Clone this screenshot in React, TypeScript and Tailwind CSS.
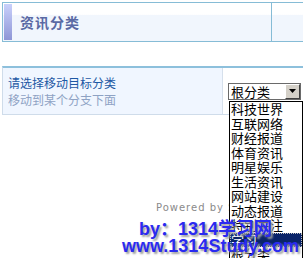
import React from "react";

const items = [
  "科技世界",
  "互联网络",
  "财经报道",
  "体育资讯",
  "明星娱乐",
  "生活资讯",
  "网站建设",
  "动态报道",
  "特别关注",
  "学习",
  "根分类",
];

export default function App() {
  const cjk = { fontFamily: '"Noto Sans CJK SC", "Noto Sans", sans-serif' };
  return (
    <div className="relative w-[303px] h-[258px] overflow-hidden bg-white" style={cjk}>
      {/* header */}
      <div className="ml-[2px] mt-[2px] w-[330px] h-[40px] border border-[#86bcd6] flex">
        <div className="w-[268px] h-full p-[1px] flex bg-[linear-gradient(to_bottom,#ffffff_0%,#ffffff_30%,#f1f6fd_32%,#f1f6fd_100%)]">
          <div className="w-[8px] h-full bg-[linear-gradient(to_bottom,#c9d0fb,#8e96d6)]" />
          <div className="flex items-center pl-[8px] text-[14px] font-bold text-[#5a69a4] tracking-[1px]">
            资讯分类
          </div>
        </div>
        <div className="w-px h-full bg-[#86bcd6]" />
        <div className="flex-1 h-full bg-[linear-gradient(to_bottom,#ffffff_0%,#ffffff_30%,#f1f6fd_32%,#f1f6fd_100%)]" />
      </div>

      {/* panel */}
      <div className="ml-[2px] mt-[24px] w-[330px] border-t-2 border-t-[#8dc0dc] border-l border-l-[#cfdcea] border-b border-b-[#cfdcea] flex h-[49px]">
        <div className="w-[220px] h-full bg-[#f0f6ff] border-r border-r-[#d6e0ec] pl-[5px] pt-[6px] text-[12px] leading-[17px]">
          <div className="text-[#1d58a4]">请选择移动目标分类</div>
          <div className="text-[#8ea2c4]">移动到某个分支下面</div>
        </div>
        <div className="flex-1 h-full flex items-center pl-[5px]">
          <div className="w-[73px] h-[17px] border border-[#6a6a6a] bg-white flex items-center justify-between">
            <span className="pl-[2px] text-[13px] leading-[15px] text-black">根分类</span>
            <div className="w-[15px] h-[15px] bg-[#d4d0c8] border-t border-l border-t-white border-l-white border-b border-r border-b-[#404040] border-r-[#404040] flex items-center justify-center">
              <svg width="7" height="4" viewBox="0 0 7 4">
                <path d="M0 0h7L3.5 4z" fill="#000" />
              </svg>
            </div>
          </div>
        </div>
      </div>

      {/* powered by */}
      <div
        className="mt-[87px] pl-[156px] text-[10px] leading-[12px] tracking-[1px] text-[#8a8a8a] whitespace-nowrap"
        style={{ fontFamily: '"DejaVu Sans", sans-serif' }}
      >
        Powered by SiteCMS
      </div>

      {/* dropdown list */}
      <div className="absolute left-[229px] top-[101px] w-[74px] border border-black bg-white">
        {items.map((t, i) => (
          <div
            key={t}
            className={
              i === 9
                ? "h-[14.5px] pl-[1px] text-[13px] leading-[14.5px] bg-[#0a246a] text-white outline outline-1 outline-dotted outline-[#c0c0c0] -outline-offset-1"
                : "h-[14.5px] pl-[1px] text-[13px] leading-[14.5px] text-black"
            }
          >
            {t}
          </div>
        ))}
      </div>

      {/* watermark */}
      <div
        className="absolute left-[122px] top-[221px] font-bold text-[18px] leading-[17px] text-[#2a2af0] [text-shadow:2px_2px_2px_#a0a0a0] whitespace-nowrap"
        style={{ fontFamily: '"Liberation Sans", "Noto Sans CJK SC", sans-serif' }}
      >
        <div className="pl-[17px]">by：1314学习网</div>
        <div>www.1314Study.com</div>
      </div>
    </div>
  );
}
